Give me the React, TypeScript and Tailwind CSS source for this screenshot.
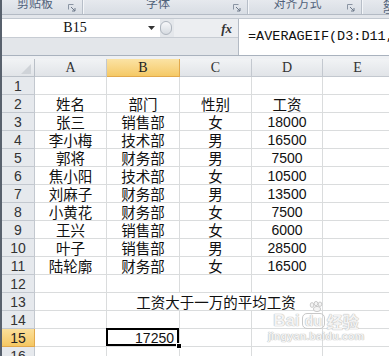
import React from 'react';

const CJK = "font-['Noto_Sans_CJK_SC',sans-serif]";
const NUM = "font-['Liberation_Sans',sans-serif]";
const SERIF = "font-['Liberation_Serif','Noto_Sans_CJK_SC',serif]";

const COLS = [
  { key: 'A', w: 'w-[72px]' },
  { key: 'B', w: 'w-[73px]' },
  { key: 'C', w: 'w-[72px]' },
  { key: 'D', w: 'w-[71px]' },
  { key: 'E', w: 'w-[70px]' },
];

// rows 1..16, columns A..D
const DATA: string[][] = [
  [],
  ['姓名', '部门', '性别', '工资'],
  ['张三', '销售部', '女', '18000'],
  ['李小梅', '技术部', '男', '16500'],
  ['郭将', '财务部', '男', '7500'],
  ['焦小阳', '技术部', '女', '10500'],
  ['刘麻子', '财务部', '男', '13500'],
  ['小黄花', '财务部', '女', '7500'],
  ['王兴', '销售部', '女', '6000'],
  ['叶子', '销售部', '男', '28500'],
  ['陆轮廓', '财务部', '女', '16500'],
  [],
  ['', '', '工资大于一万的平均工资'],
  [],
  ['', '17250'],
  [],
];

function Launcher() {
  return (
    <svg width="8" height="8" viewBox="0 0 8 8" className="shrink-0">
      <path d="M0.5 5.5V0.5H5.5" fill="none" stroke="#8a94a3" strokeWidth="1" />
      <path d="M3 3L7 7M7 4V7H4" fill="none" stroke="#6d7889" strokeWidth="1" />
    </svg>
  );
}

function RibbonGroup({ label, w }: { label: string; w: string }) {
  return (
    <div className={`${w} shrink-0 h-full flex items-start border-r border-[#b7bec8] shadow-[1px_0_0_#f4f6f9]`}>
      <span className={`flex-1 text-center text-[12px] leading-none -mt-[3px] text-[#51627a] ${CJK}`}>{label}</span>
      <span className="mr-[6px] mt-[4px]">
        <Launcher />
      </span>
    </div>
  );
}

function isNum(s: string) {
  return /^\d+$/.test(s);
}

export default function App() {
  return (
    <div className="relative w-[389px] h-[356px] overflow-hidden bg-white flex">
      <div className="w-[2px] shrink-0 bg-[#58616d]" />
      <div className="flex-1 min-w-0 flex flex-col">
        {/* ribbon group labels */}
        <div className="h-[15px] shrink-0 flex bg-gradient-to-b from-[#e6e9ee] to-[#d8dde4] border-b border-[#b3bac4] overflow-hidden">
          <RibbonGroup label="剪贴板" w="w-[81px]" />
          <RibbonGroup label="字体" w="w-[165px]" />
          <RibbonGroup label="对齐方式" w="w-[114px]" />
          <span className={`ml-[21px] text-[12px] leading-none -mt-[3px] text-[#51627a] ${CJK}`}>数字</span>
        </div>
        <div className="h-[3px] shrink-0 bg-[#e3e6eb]" />

        {/* formula bar */}
        <div className="h-[37px] shrink-0 flex border-t border-[#c2c8d0] bg-[#e4e7eb]">
          <div className="w-[236px] shrink-0 flex flex-col">
            <div className="h-[19px] flex border-b border-[#c7ccd3]">
              <div className="w-[158px] bg-white flex items-center">
                <span className={`flex-1 text-center text-[14px] leading-none text-[#111] ${SERIF}`}>B15</span>
                <svg width="8" height="5" viewBox="0 0 8 5" className="mr-[4px]">
                  <path d="M0 0H7L3.5 4Z" fill="#333" />
                </svg>
              </div>
              <div className="w-[14px] flex items-center">
                <div className="w-[12px] h-[14px] rounded-full border border-[#aeb5be] bg-gradient-to-b from-[#f7f8fa] to-[#d6dbe1]" />
              </div>
              <div className="flex-1 flex items-center justify-end pr-[6px] bg-[#eceef1]">
                <span className="font-['Liberation_Serif',serif] italic font-bold text-[13px] leading-none text-[#333]">fx</span>
              </div>
            </div>
            <div className="flex-1 bg-[#e3e6ea]" />
          </div>
          <div className="flex-1 min-w-0 bg-white border-l border-[#b3bac4] pl-[9px] pt-[3px] overflow-hidden">
            <span className="font-['Liberation_Mono',monospace] text-[13.5px] leading-[14px] text-[#111] whitespace-nowrap">
              =AVERAGEIF(D3:D11,
            </span>
          </div>
        </div>
        <div className="h-[4px] shrink-0 border-t border-[#a9b2be] bg-[#eef0f3]" />

        {/* column headers */}
        <div className="h-[18px] shrink-0 flex">
          <div className="w-[33px] shrink-0 h-full relative bg-gradient-to-b from-[#f1f3f5] to-[#e1e4e8] border-r border-b border-[#b9bfc7]">
            <svg width="10" height="10" viewBox="0 0 10 10" className="absolute right-[3px] bottom-[2px]">
              <path d="M10 0V10H0Z" fill="#cfd3d8" />
            </svg>
          </div>
          {COLS.map((c) => (
            <div
              key={c.key}
              className={`${c.w} shrink-0 h-full flex items-center justify-center border-r border-b text-[14px] leading-none ${SERIF} ${
                c.key === 'B'
                  ? 'bg-gradient-to-b from-[#fbe3a4] to-[#f5c965] border-[#e2a94c] text-[#222]'
                  : 'bg-gradient-to-b from-[#f1f3f5] to-[#e1e4e8] border-[#c3c8cf] text-[#333]'
              }`}
            >
              {c.key}
            </div>
          ))}
        </div>

        {/* rows */}
        {DATA.map((row, ri) => {
          const rn = ri + 1;
          const sel = rn === 15;
          return (
            <div key={rn} className="h-[18px] shrink-0 flex">
              <div
                className={`w-[33px] shrink-0 h-full flex items-center justify-center border-r border-b text-[14px] leading-none ${NUM} ${
                  sel
                    ? 'bg-gradient-to-b from-[#fbe09a] to-[#f5c762] border-[#e2a94c] text-[#222]'
                    : 'bg-[#e6e9ed] border-[#c3c8cf] text-[#333]'
                }`}
              >
                {rn}
              </div>
              {COLS.map((c, ci) => {
                const v = row[ci] ?? '';
                const hideRight = rn === 13 && (ci === 1 || ci === 2);
                const isSel = rn === 15 && ci === 1;
                return (
                  <div
                    key={c.key}
                    className={`${c.w} shrink-0 h-full flex items-center border-b border-[#dadcdd] ${
                      hideRight ? '' : 'border-r'
                    } ${isSel ? 'justify-end pr-[5px] relative' : 'justify-center'} ${
                      rn === 13 && ci === 2 ? 'relative z-10' : ''
                    }`}
                  >
                    {v && (
                      <span
                        className={`whitespace-nowrap leading-[14px] text-[#111] ${
                          isNum(v) ? `${NUM} text-[14px]` : `${CJK} text-[14.5px]`
                        }`}
                      >
                        {v}
                      </span>
                    )}
                    {isSel && (
                      <>
                        <div className="absolute -left-[1px] -top-[1px] right-0 bottom-0 border-2 border-black pointer-events-none" />
                        <div className="absolute -right-[3px] -bottom-[3px] w-[6px] h-[6px] bg-black border border-white" />
                      </>
                    )}
                  </div>
                );
              })}
            </div>
          );
        })}
      </div>

      {/* baidu watermark */}
      <div className="absolute left-[271px] top-[301px] w-[90px] flex flex-col items-center pointer-events-none">
        <svg width="18" height="11" viewBox="0 0 18 11" className="ml-[2px]">
          <g fill="#f4f4f4" stroke="#c4c4c4" strokeWidth="0.9">
            <ellipse cx="4" cy="4" rx="1.8" ry="2.4" />
            <ellipse cx="8" cy="2.6" rx="1.8" ry="2.2" />
            <ellipse cx="12" cy="3.2" rx="1.8" ry="2.2" />
            <ellipse cx="9" cy="8" rx="3.6" ry="2.6" />
          </g>
        </svg>
        <div className="flex items-center gap-[2px] font-['Liberation_Sans',sans-serif] font-bold text-[17px] leading-none text-[#f3f3f3] [text-shadow:0_0_1px_#b4b4b4,0_0_1px_#b4b4b4]">
          <span>Bai</span>
          <span className="px-[2px] rounded-[5px] border border-[#c8c8c8] text-[14px]">du</span>
          <span className={`${CJK} text-[16px]`}>经验</span>
        </div>
        <span className="mt-[2px] font-['Liberation_Sans',sans-serif] font-bold text-[11px] leading-none text-[#f3f3f3] [text-shadow:0_0_1px_#b4b4b4,0_0_1px_#b4b4b4]">
          jingyan.baidu.com
        </span>
      </div>
    </div>
  );
}
